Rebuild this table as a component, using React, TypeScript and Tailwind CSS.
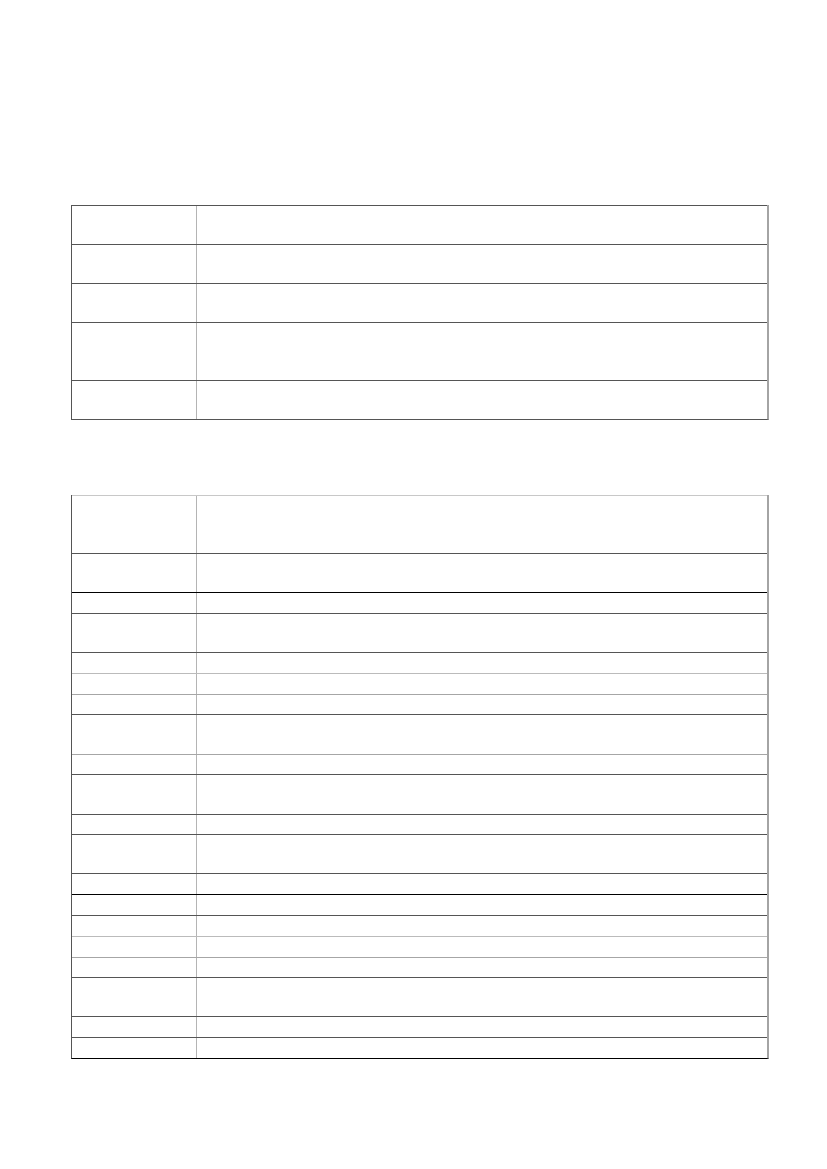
import React from 'react';

interface Row {
  h: number;
  line: string;
}

// Row heights and top rule colour for each row, measured from the page.
const firstTable: Row[] = [
  { h: 39, line: 'border-[#555555]' },
  { h: 39, line: 'border-[#555555]' },
  { h: 39, line: 'border-[#555555]' },
  { h: 58, line: 'border-[#555555]' },
  { h: 39, line: 'border-[#555555]' },
];

const secondTable: Row[] = [
  { h: 58, line: 'border-[#c8c8c8]' },
  { h: 39, line: 'border-[#555555]' },
  { h: 21, line: 'border-[#000000]' },
  { h: 39, line: 'border-[#555555]' },
  { h: 21, line: 'border-[#555555]' },
  { h: 21, line: 'border-[#bbbbbb]' },
  { h: 20, line: 'border-[#a6a6a6]' },
  { h: 40, line: 'border-[#555555]' },
  { h: 20, line: 'border-[#a6a6a6]' },
  { h: 40, line: 'border-[#555555]' },
  { h: 20, line: 'border-[#555555]' },
  { h: 39, line: 'border-[#555555]' },
  { h: 21, line: 'border-[#555555]' },
  { h: 21, line: 'border-[#000000]' },
  { h: 21, line: 'border-[#555555]' },
  { h: 21, line: 'border-[#bbbbbb]' },
  { h: 20, line: 'border-[#a6a6a6]' },
  { h: 39, line: 'border-[#555555]' },
  { h: 21, line: 'border-[#555555]' },
  { h: 21, line: 'border-[#555555]' },
];

const BlankTable: React.FC<{ rows: Row[]; bottom: string; className?: string }> = ({ rows, bottom, className }) => (
  <div className={`ml-[71px] w-[698px] border-l border-l-[#555555] border-r-2 border-r-[#a4a4a4] border-b ${bottom} ${className ?? ''}`}>
    {rows.map((row, i) => (
      <div key={i} className={`flex border-t ${row.line}`} style={{ height: row.h }}>
        <div className="w-[125px] shrink-0 border-r border-r-[#b4b4b4]"></div>
        <div className="flex-1"></div>
      </div>
    ))}
  </div>
);

export default function App() {
  return (
    <div className="min-h-[1169px] w-[827px] bg-white pt-[205px] font-['Liberation_Sans',sans-serif]">
      <BlankTable rows={firstTable} bottom="border-b-[#555555]" />
      <BlankTable rows={secondTable} bottom="border-b-[#000000]" className="mt-[75px]" />
    </div>
  );
}
